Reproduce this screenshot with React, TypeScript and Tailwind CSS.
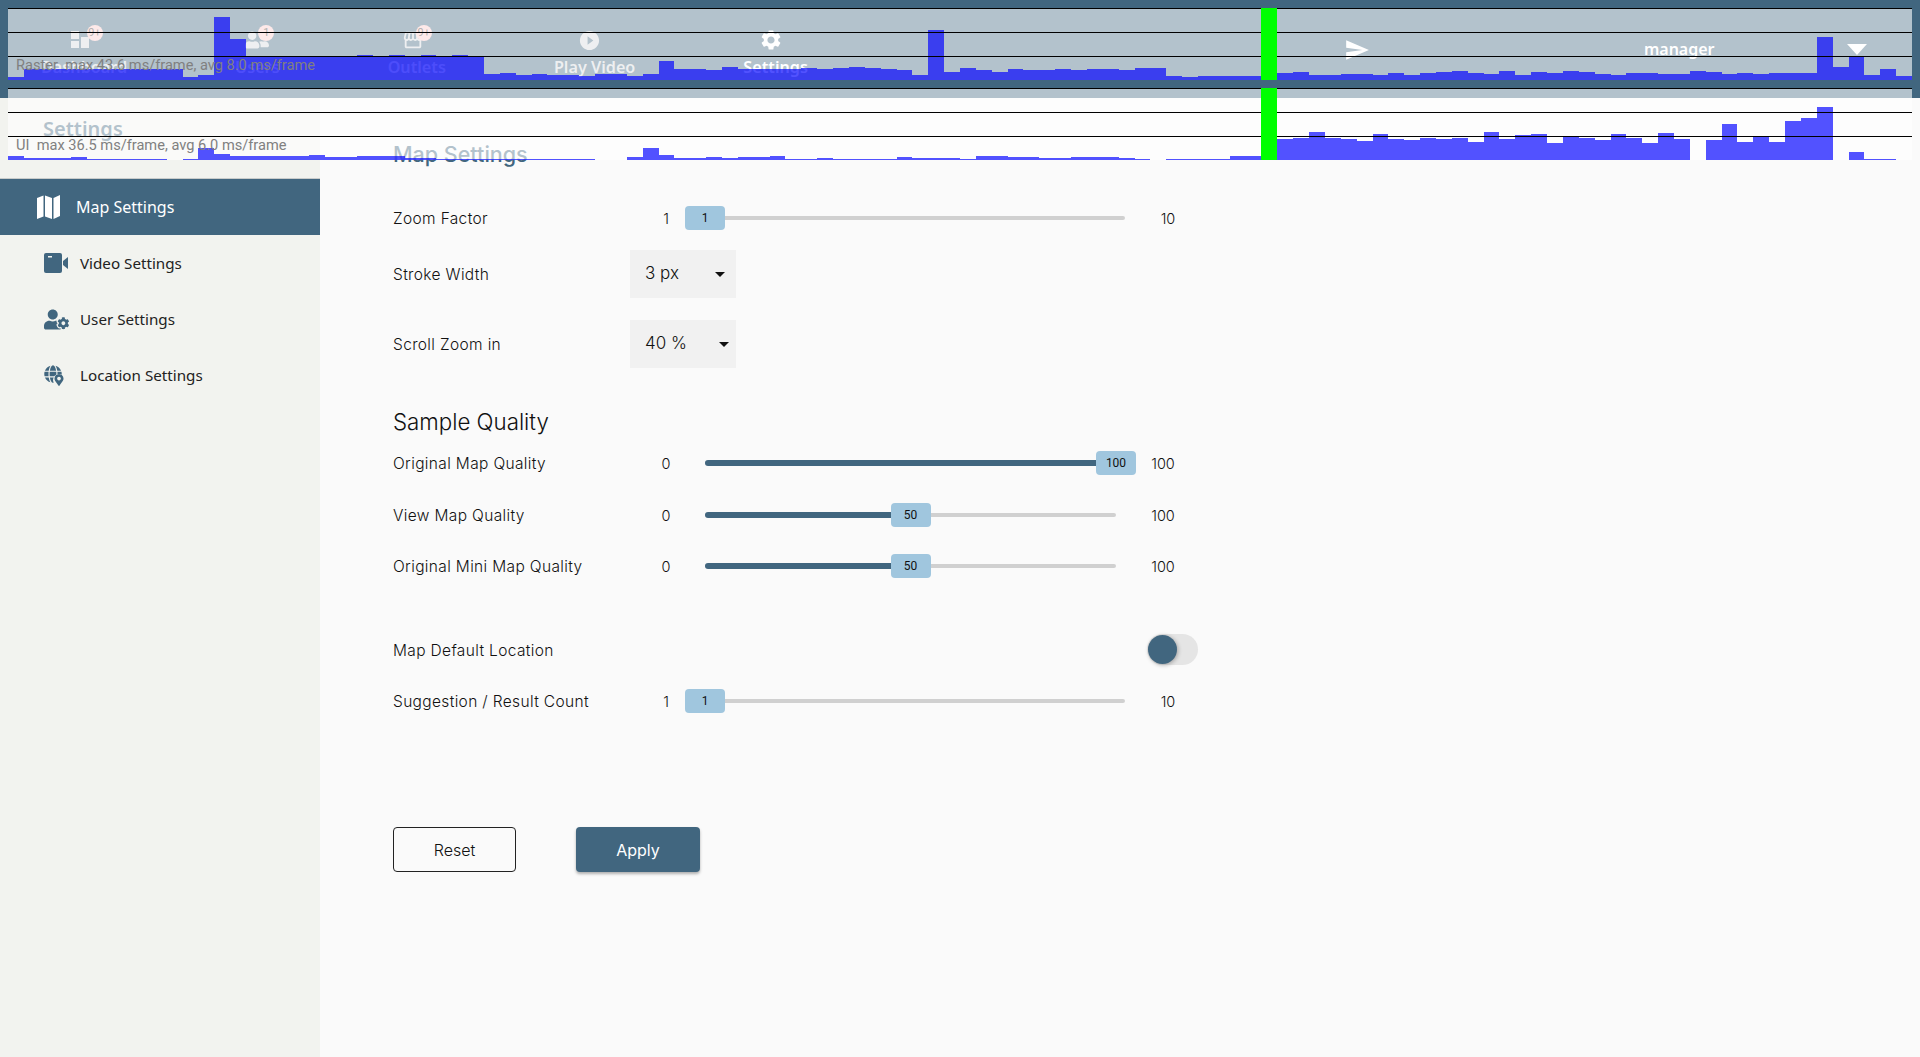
import React from "react";
import { FaUserCog, FaGlobe, FaMapMarkerAlt, FaUserFriends } from "react-icons/fa";
import { MdStorefront, MdPlayCircleFilled, MdSettings, MdSend } from "react-icons/md";

const raster = [3,11,11,11,11,11,11,11,11,11,11,3,5,63,41,23,23,23,23,23,23,23,25,23,25,23,25,23,25,23,6,7,5,6,5,5,4,6,6,4,6,19,11,11,10,13,11,11,11,11,12,11,12,13,12,11,10,5,50,8,12,10,8,11,10,10,11,10,11,11,10,12,12,4,3,4,4,4,4,0,7,8,5,5,6,6,5,7,5,7,8,9,7,6,9,5,8,7,9,8,6,5,7,7,6,6,9,8,6,7,6,7,7,7,43,13,23,5,11,4];
const ui = [4,2,2,2,3,1,1,1,1,1,0,1,12,6,4,4,4,4,4,5,3,3,4,4,4,2,2,1,1,1,1,1,1,1,1,1,1,0,0,3,12,5,2,2,3,2,3,3,4,1,1,2,1,1,1,1,3,2,2,2,1,4,4,3,3,2,2,3,3,3,2,1,0,1,1,1,1,4,4,0,21,22,28,22,21,19,26,21,20,22,21,22,18,28,21,25,26,17,23,22,20,26,22,17,27,21,0,20,36,18,24,18,39,42,53,0,8,1,1,0];

function Graph({ data, label }: { data: number[]; label: string }) {
  const w = 1904 / 120;
  return (
    <div className="relative h-[72px] w-[1904px] bg-[rgba(255,255,255,0.6)]">
      <svg width="1904" height="72" className="block" shapeRendering="crispEdges">
        {data.map((h, i) => (
          <rect key={i} x={i * w} y={72 - h} width={w} height={h} fill="rgba(0,0,255,0.68)" />
        ))}
        <rect x="0" y="0" width="1904" height="1" fill="#000" />
        <rect x="0" y="24" width="1904" height="1" fill="#000" />
        <rect x="0" y="48" width="1904" height="1" fill="#000" />
        <rect x={79 * w} y="0" width={w} height="72" fill="#00ff00" />
      </svg>
      <span className="absolute left-2 top-[48px] whitespace-pre font-['Roboto',sans-serif] text-[14.6px] leading-[18px] text-[#808080]">
        {label}
      </span>
    </div>
  );
}

function DashIcon() {
  return (
    <svg width="18" height="18" viewBox="0 0 18 18" fill="currentColor">
      <rect x="0" y="0" width="8" height="8" />
      <rect x="0" y="10" width="8" height="7" />
      <rect x="10" y="6" width="8" height="11" />
    </svg>
  );
}

function MapIcon() {
  return (
    <svg width="23" height="24" viewBox="0 0 23 24" fill="white" className="ml-[37px] mr-[16px]">
      <path d="M0 3l6.5-2.5v21L0 24z" />
      <path d="M8 0.5l7 2.5v21l-7-2.5z" />
      <path d="M16.5 3l6.5-3v21l-6.5 3z" />
    </svg>
  );
}

function Badge({ text, className }: { text: string; className: string }) {
  return (
    <span className={`absolute flex h-[16px] w-[16px] items-center justify-center rounded-full bg-[#fac8c8] font-['Roboto',sans-serif] text-[11px] text-[#333] ${className}`}>
      {text}
    </span>
  );
}

function NavItem({ icon, label, iconShift, white }: { icon: React.ReactNode; label: string; iconShift: string; white?: boolean }) {
  return (
    <div className={`flex flex-col items-center ${white ? "text-white" : "text-[#d4d8db]"}`}>
      <div className={`relative flex h-[20px] items-center justify-center ${iconShift}`}>{icon}</div>
      <span className="mt-[6px] whitespace-nowrap font-['Noto_Sans',sans-serif] text-[16.2px] font-semibold leading-[22px]">{label}</span>
    </div>
  );
}

function Slider({ min, max, value, percent, width, endClass, filled }: { min: string; max: string; value: string; percent: number; width: string; endClass: string; filled?: boolean }) {
  return (
    <>
      <span className="w-[72px] pt-[2px] text-center text-[14.5px] font-light text-[#111]">{min}</span>
      <div className={`relative ml-[3px] flex h-[24px] items-center ${width}`}>
        <div className="h-[4px] w-full rounded-full bg-[#d0d0d0]" />
        {filled && <div className="absolute left-0 top-[9px] h-[6px] rounded-l-full bg-[#41667f]" style={{ width: `${percent}%` }} />}
        <div
          className="absolute top-0 ml-[-20px] flex h-[24px] w-[40px] items-center justify-center rounded-[4px] bg-[#a0c6de] font-['Roboto',sans-serif] text-[12px] text-[#111]"
          style={{ left: `${percent}%` }}
        >
          {value}
        </div>
      </div>
      <span className={`w-[50px] pt-[2px] text-center text-[14.5px] font-light text-[#111] ${endClass}`}>{max}</span>
    </>
  );
}

function Label({ children }: { children: React.ReactNode }) {
  return <span className="w-[237px] whitespace-nowrap pt-[2px] text-[15.5px] font-light tracking-[0.35px] text-[#111]">{children}</span>;
}

function Select({ value, arrow }: { value: string; arrow: string }) {
  return (
    <div className="relative flex h-[48px] w-[106px] items-center bg-[#f1f1f1] pl-[15px] text-[17px] font-light text-[#111]">
      {value}
      <span className={`absolute top-[22px] h-0 w-0 border-x-[5px] border-t-[5px] border-x-transparent border-t-[#111] ${arrow}`} />
    </div>
  );
}

function SideItem({ icon, label, active }: { icon: React.ReactNode; label: string; active?: boolean }) {
  return (
    <div className={`flex h-[56px] items-center font-['Noto_Sans',sans-serif] ${active ? "bg-[#41667f] text-[16px] text-white" : "text-[15.2px] text-[#222]"}`}>
      {icon}
      {label}
    </div>
  );
}

export default function App() {
  return (
    <div className="relative flex h-screen w-full flex-col overflow-hidden bg-[#fafafa] font-['Inter',sans-serif]">
      <header className="flex h-[98px] shrink-0 items-start bg-[#41667f] pl-[41px] pt-[30px]">
        <div className="flex gap-[108px]">
          <NavItem iconShift="-ml-[9px]" label="Dashboard" icon={<><DashIcon /><Badge text="9+" className="left-[16px] -top-[5px]" /></>} />
          <NavItem iconShift="" label="Users" icon={<><FaUserFriends size={24} /><Badge text="1" className="left-[13px] -top-[5px]" /></>} />
          <NavItem iconShift="-ml-[8px]" label="Outlets" icon={<><MdStorefront size={22} /><Badge text="9+" className="left-[14px] -top-[5px]" /></>} />
          <NavItem iconShift="-ml-[10px]" label="Play Video" icon={<MdPlayCircleFilled size={23} />} />
          <NavItem white iconShift="-ml-[10px]" label="Settings" icon={<MdSettings size={24} />} />
        </div>
        <MdSend size={26} className="ml-[536px] mt-[7px] text-white" />
        <span className="ml-[274px] mt-[9px] font-['Noto_Sans',sans-serif] text-[16px] font-semibold leading-[20px] text-white">manager</span>
        <span className="ml-[132px] mt-[14px] h-0 w-0 border-x-[10px] border-t-[11px] border-x-transparent border-t-white" />
      </header>

      <div className="flex min-h-0 flex-1">
        <aside className="w-[320px] shrink-0 bg-[#f2f3ef]">
          <div className="h-[81px] border-b border-[#c9cccb] pl-[43px] pt-[16px] font-['Noto_Sans',sans-serif] text-[20px] font-semibold leading-[30px] text-[#41667f]">
            Settings
          </div>
          <SideItem active label="Map Settings" icon={<MapIcon />} />
          <SideItem
            label="Video Settings"
            icon={
              <svg width="24" height="20" viewBox="0 0 24 20" className="ml-[44px] mr-[12px]">
                <rect x="0" y="0" width="18" height="20" rx="2" fill="#41667f" />
                <rect x="4" y="3" width="4" height="1.5" fill="#f2f3ef" />
                <path d="M19 8l5-4v12l-5-4z" fill="#41667f" />
              </svg>
            }
          />
          <SideItem label="User Settings" icon={<FaUserCog size={25} className="ml-[44px] mr-[11px] text-[#41667f]" />} />
          <SideItem
            label="Location Settings"
            icon={
              <span className="relative ml-[44px] mr-[15px] block h-[21px] w-[21px] text-[#41667f]">
                <FaGlobe size={18} />
                <FaMapMarkerAlt size={12} className="absolute bottom-0 right-0 rounded-full bg-[#f2f3ef] text-[#41667f]" />
              </span>
            }
          />
        </aside>

        <main className="flex-1 pl-[73px] pt-[41px]">
          <h1 className="h-[30px] text-[21.5px] font-medium leading-[30px] text-[#41667f]">Map Settings</h1>

          <div className="mt-[37px] flex h-[24px] items-center">
            <Label>Zoom Factor</Label>
            <Slider min="1" max="10" value="1" percent={0} width="w-[420px]" endClass="ml-[18px]" />
          </div>
          <div className="mt-[20px] flex h-[48px] items-center">
            <Label>Stroke Width</Label>
            <Select value="3 px" arrow="left-[85px]" />
          </div>
          <div className="mt-[22px] flex h-[48px] items-center">
            <Label>Scroll Zoom in</Label>
            <Select value="40 %" arrow="left-[89px]" />
          </div>

          <h2 className="mt-[39px] h-[30px] text-[22.3px] font-light leading-[30px] text-[#111]">Sample Quality</h2>

          <div className="mt-[14px] flex h-[24px] items-center">
            <Label>Original Map Quality</Label>
            <Slider filled min="0" max="100" value="100" percent={100} width="w-[411px]" endClass="ml-[22px]" />
          </div>
          <div className="mt-[28px] flex h-[24px] items-center">
            <Label>View Map Quality</Label>
            <Slider filled min="0" max="100" value="50" percent={50} width="w-[411px]" endClass="ml-[22px]" />
          </div>
          <div className="mt-[27px] flex h-[24px] items-center">
            <Label>Original Mini Map Quality</Label>
            <Slider filled min="0" max="100" value="50" percent={50} width="w-[411px]" endClass="ml-[22px]" />
          </div>

          <div className="mt-[56px] flex h-[31px] items-center">
            <span className="w-[754px] pt-[2px] text-[15.5px] font-light tracking-[0.35px] text-[#111]">Map Default Location</span>
            <div className="relative h-[31px] w-[51px] rounded-full bg-[#e5e5e5]">
              <div className="absolute left-[1px] top-[1px] h-[29px] w-[29px] rounded-full bg-[#41667f] shadow-[1px_1px_4px_rgba(0,0,0,0.3)]" />
            </div>
          </div>

          <div className="mt-[24px] flex h-[24px] items-center">
            <Label>Suggestion / Result Count</Label>
            <Slider min="1" max="10" value="1" percent={0} width="w-[420px]" endClass="ml-[18px]" />
          </div>

          <div className="mt-[114px] flex gap-[60px]">
            <button className="h-[45px] w-[123px] rounded-[4px] border border-[#222] text-[16px] font-light text-[#111]">Reset</button>
            <button className="h-[45px] w-[124px] rounded-[4px] bg-[#41667f] text-[16px] text-white shadow-[0_2px_3px_rgba(0,0,0,0.3)]">Apply</button>
          </div>
        </main>
      </div>

      <div className="pointer-events-none absolute left-2 top-2 flex flex-col gap-2">
        <Graph data={raster} label="Raster  max 43.6 ms/frame, avg 8.0 ms/frame" />
        <Graph data={ui} label="UI  max 36.5 ms/frame, avg 6.0 ms/frame" />
      </div>
    </div>
  );
}
